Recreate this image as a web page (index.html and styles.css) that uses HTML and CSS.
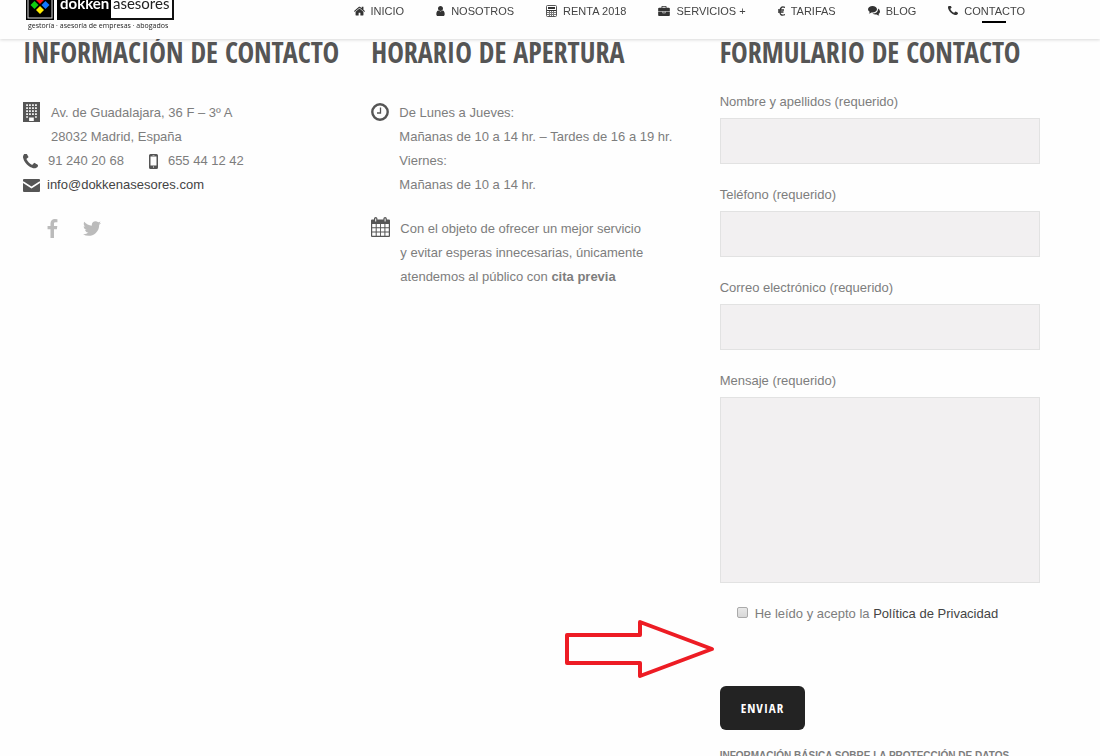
FILE: index.html
```html
<!DOCTYPE html>
<html lang="es">
  <head>
    <meta charset="utf-8">
    <title>Contacto - Dokken Asesores</title>
    <link rel="stylesheet" href="styles.css">
  </head>
  <body>
    <header class="header">
      <a href="#" class="logo" aria-label="Dokken Asesores">
        <svg width="150" height="40" viewBox="0 0 150 40">
          <rect x="1" y="-1" width="28" height="30" fill="#000"/>
          <rect x="3" y="1" width="24" height="26" fill="none" stroke="#ddd"/>
          <path d="M15 5l4 4-4 4-4-4z" fill="#f11"/>
          <path d="M9.500 10l4 4-4 4-4-4z" fill="#1c1"/>
          <path d="M20.500 10l4 4-4 4-4-4z" fill="#17f"/>
          <path d="M15 15l4 4-4 4-4-4z" fill="#fe0"/>
          <rect x="33" y="0" width="115" height="28" fill="#fff" stroke="#111" stroke-width="2"/>
          <rect x="32" y="0" width="54" height="29" fill="#000"/>
          <text x="35" y="18" class="logo-name logo-bold">dokken</text>
          <text x="88" y="18" class="logo-name">asesores</text>
          <text x="3" y="37" class="logo-tag">gestoría · asesoría de empresas · abogados</text>
        </svg>
      </a>
      <nav class="nav">
        <a href="#"><svg width="11" height="10" viewBox="90 190 1610 1400"><path d="M1472 992v480q0 26-19 45t-45 19h-384v-384h-256v384h-384q-26 0-45-19t-19-45v-480q0-1 .5-3t.5-3l575-474 575 474q1 2 1 6zm223-69l-62 74q-8 9-21 11h-3q-13 0-21-7l-692-577-692 577q-12 8-24 7-13-2-21-11l-62-74q-8-10-7-23.500t11-21.500l719-599q32-26 76-26t76 26l244 204v-195q0-14 9-23t23-9h192q14 0 23 9t9 23v408l219 182q10 8 11 21.500t-7 23.500z"/></svg>INICIO</a>
        <a href="#"><svg width="9" height="10" viewBox="256 128 1280 1536"><path d="M1536 1399q0 109-62.500 187t-150.500 78h-854q-88 0-150.500-78t-62.500-187q0-85 8.500-160.500t31.500-152 58.500-131 94-89 134.500-34.500q131 128 313 128t313-128q76 0 134.500 34.500t94 89 58.500 131 31.500 152 8.500 160.500zm-256-887q0 159-112.500 271.500t-271.500 112.500-271.500-112.500-112.500-271.500 112.500-271.500 271.500-112.500 271.500 112.500 112.500 271.500z"/></svg>NOSOTROS</a>
        <a href="#"><svg width="11" height="12" viewBox="0 0 11 12"><rect x=".5" y=".5" width="10" height="11" rx="1" fill="none" stroke="#555"/><path d="M2 2h7v2H2zM1 5h9v1H1z"/><path d="M1 7.500h9M1 9.500h9M3.500 6v5M5.500 6v5M7.500 6v5" fill="none" stroke="#777"/></svg>RENTA 2018</a>
        <a href="#"><svg width="12" height="10" viewBox="0 0 1792 1536"><path d="M640 256h512v-128h-512v128zm1152 640v480q0 66-47 113t-113 47h-1472q-66 0-113-47t-47-113v-480h672v160q0 26 19 45t45 19h320q26 0 45-19t19-45v-160h672zm-768 0v128h-256v-128h256zm768-480v384h-1792v-384q0-66 47-113t113-47h352v-160q0-40 28-68t68-28h576q40 0 68 28t28 68v160h352q66 0 113 47t47 113z"/></svg>SERVICIOS +</a>
        <a href="#"><svg width="7" height="10" viewBox="0 0 7 10"><path d="M7 1.500Q2.500-.5 2 5T7 8.500M0 4h6M0 6h5.500" fill="none" stroke="#333" stroke-width="1.300"/></svg>TARIFAS</a>
        <a href="#"><svg width="12" height="10" viewBox="0 0 12 10"><path d="M4.500 0C7 0 9 1.500 9 3.300S7 6.600 4.500 6.600L3.500 6.500Q2.200 7.600.8 7.600L1.800 5.900Q0 5 0 3.300C0 1.500 2 0 4.500 0zM10 2.500Q12 3.700 12 5.400 12 7 10.500 7.900L11.300 9.600Q9.800 9.500 8.600 8.500 6 8.800 4.500 7.600 9.500 7.400 10 3.500z"/></svg>BLOG</a>
        <a href="#" class="active"><svg width="10" height="10" viewBox="192 256 1408 1408"><path d="M1600 1240q0 27-10 70.500t-21 68.500q-21 50-122 106-94 51-186 51-27 0-53-3.500t-57.500-12.500-47-14.500-55.500-20.500-49-18q-98-35-175-83-127-79-264-216t-216-264q-48-77-83-175-3-9-18-49t-20.500-55.500-14.500-47-12.500-57.500-3.500-53q0-92 51-186 56-101 106-122 25-11 68.500-21t70.500-10q14 0 21 3 18 6 53 76 11 19 30 54t35 63.500 31 53.500q3 4 17.500 25t21.500 35.500 7 28.500q0 20-28.500 50t-62 55-62 53-28.500 46q0 9 5 22.500t8.500 20.500 14 24 11.500 19q76 137 174 235t235 174q2 1 19 11.500t24 14 20.500 8.500 22.500 5q18 0 46-28.500t53-62 55-62 50-28.500q14 0 28.500 7t35.500 21.500 25 17.500q25 15 53.500 31t63.500 35 54 30q70 35 76 53 3 7 3 21z"/></svg>CONTACTO</a>
      </nav>
    </header>

    <main class="columns">
      <section>
        <h2>INFORMACIÓN DE CONTACTO</h2>
        <div class="row address">
          <svg width="17" height="20" viewBox="0 0 17 20"><path fill-rule="evenodd" d="M0 0h17v20H0zM3.200 2.200v1.700h1.700V2.200zM6.100 2.200v1.700h1.700V2.200zM9.100 2.200v1.700h1.700V2.200zM12.100 2.200v1.700h1.700V2.200zM3.200 5.200v1.700h1.700V5.200zM6.100 5.200v1.700h1.700V5.200zM9.100 5.200v1.700h1.700V5.200zM12.100 5.200v1.700h1.700V5.200zM3.200 8.200v1.700h1.700V8.200zM6.100 8.200v1.700h1.700V8.200zM9.100 8.200v1.700h1.700V8.200zM12.100 8.200v1.700h1.700V8.200zM3.200 11.200v1.700h1.700v-1.700zM6.100 11.200v1.700h1.700v-1.700zM9.100 11.200v1.700h1.700v-1.700zM12.100 11.200v1.700h1.700v-1.700zM3.200 14.200v1.500h1.700v-1.500zM12.100 14.200v1.500h1.700v-1.500zM6.100 15.500V19h4.700v-3.500z"/></svg>
          <p>Av. de Guadalajara, 36 F – 3º A<br>28032 Madrid, España</p>
        </div>
        <div class="row phones">
          <svg width="15" height="15" viewBox="192 256 1408 1280"><path d="M1600 1240q0 27-10 70.500t-21 68.500q-21 50-122 106-94 51-186 51-27 0-53-3.500t-57.500-12.500-47-14.500-55.500-20.500-49-18q-98-35-175-83-127-79-264-216t-216-264q-48-77-83-175-3-9-18-49t-20.500-55.500-14.500-47-12.500-57.500-3.500-53q0-92 51-186 56-101 106-122 25-11 68.500-21t70.500-10q14 0 21 3 18 6 53 76 11 19 30 54t35 63.500 31 53.500q3 4 17.500 25t21.500 35.500 7 28.500q0 20-28.500 50t-62 55-62 53-28.500 46q0 9 5 22.500t8.500 20.500 14 24 11.500 19q76 137 174 235t235 174q2 1 19 11.500t24 14 20.500 8.500 22.500 5q18 0 46-28.500t53-62 55-62 50-28.500q14 0 28.500 7t35.500 21.500 25 17.500q25 15 53.500 31t63.500 35 54 30q70 35 76 53 3 7 3 21z"/></svg>
          <span>91 240 20 68</span>
          <svg class="mobile" width="9" height="15" viewBox="0 0 9 15"><path fill-rule="evenodd" d="M1.500 0h6Q9 0 9 1.500v12Q9 15 7.500 15h-6Q0 15 0 13.500v-12Q0 0 1.500 0zM1.500 2.500v9h6v-9zM3.500 1v.6h2V1zM4 12.500v1h1v-1z"/></svg>
          <span>655 44 12 42</span>
        </div>
        <div class="row mail">
          <svg width="17" height="13" viewBox="0 0 17 13"><rect width="17" height="13" rx="1"/><path d="M0 3l8.500 5.500L17 3" fill="none" stroke="#fff" stroke-width="1.500"/></svg>
          <a href="mailto:info@dokkenasesores.com">info@dokkenasesores.com</a>
        </div>
        <div class="social">
          <a href="#" aria-label="Facebook"><svg width="11" height="19" viewBox="479 0 864 1664"><path d="M1343 12v264h-157q-86 0-116 36t-30 108v189h293l-39 296h-254v759h-306v-759h-255v-296h255v-218q0-186 104-288.500t277-102.500q147 0 228 12z"/></svg></a>
          <a href="#" aria-label="Twitter"><svg width="18" height="15" viewBox="108 256 1576 1280"><path d="M1684 408q-67 98-162 167 1 14 1 42 0 130-38 259.500t-115.500 248.500-184.500 210.500-258 146-323 54.500q-271 0-496-145 35 4 78 4 225 0 401-138-105-2-188-64.500t-114-159.500q33 5 61 5 43 0 85-11-112-23-185.500-111.500t-73.500-205.500v-4q68 38 146 41-66-44-105-115t-39-154q0-88 44-163 121 149 294.500 238.500t371.500 99.500q-8-38-8-74 0-134 94.500-228.500t228.500-94.500q140 0 236 102 109-21 205-78-37 115-142 178 93-10 186-50z"/></svg></a>
        </div>
      </section>

      <section>
        <h2>HORARIO DE APERTURA</h2>
        <div class="row hours">
          <svg width="18" height="18" viewBox="0 0 18 18"><circle cx="9" cy="9" r="7.700" fill="none" stroke="#555" stroke-width="2.400"/><path d="M9.500 4.500V10H6" fill="none" stroke="#555" stroke-width="1.300"/></svg>
          <p>De Lunes a Jueves:<br>Mañanas de 10 a 14 hr. – Tardes de 16 a 19 hr.<br>Viernes:<br>Mañanas de 10 a 14 hr.</p>
        </div>
        <div class="row notice">
          <svg width="19" height="20" viewBox="0 0 19 20"><path fill-rule="evenodd" d="M1 2.500h2V1.500Q3 0 4.700 0T6.400 1.500v1h6v-1Q12.400 0 14.100 0t1.700 1.500v1H18q1 0 1 1V19q0 1-1 1H1q-1 0-1-1V3.500q0-1 1-1zM4.200 1.400v3h1v-3zM13.600 1.400v3h1v-3zM1.200 7v3.300h3.500V7zM5.700 7v3.300h3.400V7zM10 7v3.300h3.400V7zM14.400 7v3.300h3.400V7zM1.200 11.200v3.300h3.500v-3.300zM5.700 11.200v3.300h3.400v-3.300zM10 11.200v3.300h3.400v-3.300zM14.400 11.200v3.300h3.400v-3.300zM1.200 15.500v3.300h3.500v-3.300zM5.700 15.500v3.300h3.400v-3.300zM10 15.500v3.300h3.400v-3.300zM14.400 15.500v3.300h3.400v-3.300z"/></svg>
          <p>Con el objeto de ofrecer un mejor servicio<br>y evitar esperas innecesarias, únicamente<br>atendemos al público con <strong>cita previa</strong></p>
        </div>
      </section>

      <section>
        <h2>FORMULARIO DE CONTACTO</h2>
        <form class="form">
          <div class="field">
            <label for="nombre">Nombre y apellidos (requerido)</label>
            <input type="text" id="nombre">
          </div>
          <div class="field">
            <label for="telefono">Teléfono (requerido)</label>
            <input type="tel" id="telefono">
          </div>
          <div class="field">
            <label for="correo">Correo electrónico (requerido)</label>
            <input type="email" id="correo">
          </div>
          <div class="field">
            <label for="mensaje">Mensaje (requerido)</label>
            <textarea id="mensaje"></textarea>
          </div>
          <div class="accept">
            <input type="checkbox" id="acepto">
            <label for="acepto">He leído y acepto la <a href="#">Política de Privacidad</a></label>
            <svg class="arrow" width="150" height="60" viewBox="0 0 150 60"><path d="M2 16h73V3l72 27-72 27V44H2z" fill="none" stroke="#ed1c24" stroke-width="4" stroke-linejoin="round"/></svg>
          </div>
          <button type="submit">ENVIAR</button>
        </form>
        <p class="legal">INFORMACIÓN BÁSICA SOBRE LA PROTECCIÓN DE DATOS</p>
      </section>
    </main>
  </body>
</html>
```
FILE: styles.css
```css
* {
  box-sizing: border-box;
}
body {
  margin: 0;
  height: 100vh;
  overflow: hidden;
  background-color: #fefefe;
  color: #7d7d7d;
  font-family: "Liberation Sans", Arial, sans-serif;
  font-size: 13px;
  line-height: 24px;
}
p {
  margin: 0;
}
a {
  color: #444;
  text-decoration: none;
}
svg {
  flex: none;
  fill: #555;
}
.header {
  position: sticky;
  top: 0;
  z-index: 2;
  display: flex;
  justify-content: space-between;
  align-items: flex-end;
  height: 39px;
  padding: 0 75px 8px 25px;
  background-color: #fefefe;
  box-shadow: 0 1px 3px rgba(0, 0, 0, 0.15);
}
.logo svg {
  display: block;
  overflow: visible;
}
.logo-name {
  font-family: Lato, sans-serif;
  font-size: 15px;
  fill: #222;
}
.logo-bold {
  font-weight: bold;
  fill: #fff;
}
.logo-tag {
  font-family: "Open Sans", sans-serif;
  font-size: 7px;
  fill: #222;
}
.nav {
  display: flex;
  gap: 32px;
  font-size: 11px;
}
.nav a {
  display: flex;
  align-items: center;
  gap: 6px;
  height: 24px;
  margin-bottom: 8px;
}
.nav svg {
  fill: #333;
}
.nav .active {
  position: relative;
}
.nav .active::after {
  content: "";
  position: absolute;
  left: 34px;
  bottom: 0;
  width: 24px;
  height: 2px;
  background-color: #000;
}
.columns {
  display: grid;
  grid-template-columns: repeat(3, minmax(0, 1fr));
  gap: 28px;
  padding: 0 60px 0 23px;
}
h2 {
  margin: 0 0 36px;
  color: #555;
  font-family: "Open Sans Condensed", "Liberation Sans Narrow", "Open Sans", sans-serif;
  font-size: 28px;
  font-weight: bold;
  line-height: 26px;
  white-space: nowrap;
}
.row {
  display: flex;
  align-items: center;
}
.address,
.hours,
.notice {
  align-items: flex-start;
}
.address {
  gap: 11px;
}
.address svg {
  margin-top: 1px;
}
.phones {
  gap: 10px;
}
.phones .mobile {
  margin-left: 15px;
}
.mail {
  gap: 7px;
}
.hours {
  gap: 10px;
  margin-bottom: 20px;
}
.notice {
  gap: 10px;
}
.hours svg {
  margin-top: 2px;
}
.social {
  display: flex;
  align-items: center;
  gap: 25px;
  margin: 22px 0 0 24px;
}
.social a {
  display: flex;
}
.social svg {
  fill: #bbb;
}
.form {
  margin-top: -11px;
}
.field {
  display: flex;
  flex-direction: column;
  gap: 4px;
  margin-bottom: 19px;
}
.field input,
.field textarea {
  width: 100%;
  height: 46px;
  padding: 8px 12px;
  border: 1px solid #e2e2e2;
  border-radius: 0;
  background-color: #f2f0f1;
  color: #555;
  font: inherit;
}
.field textarea {
  height: 186px;
  resize: none;
}
.accept {
  position: relative;
  display: flex;
  align-items: center;
  gap: 7px;
  padding-left: 17px;
  margin-bottom: 60px;
}
.accept input {
  appearance: none;
  width: 11px;
  height: 11px;
  margin: 0 0 4px;
  border: 1px solid #aaa;
  border-radius: 2px;
  background: linear-gradient(#e8e8e8, #d8d8d8);
}
.arrow {
  position: absolute;
  left: -155px;
  top: 17px;
}
button {
  display: block;
  height: 44px;
  padding: 0 21px;
  border: none;
  border-radius: 6px;
  background-color: #232323;
  color: #fff;
  font-family: "Open Sans Condensed", "Liberation Sans Narrow", "Open Sans", sans-serif;
  font-size: 13px;
  font-weight: bold;
  letter-spacing: 1px;
  cursor: pointer;
}
.legal {
  margin-top: 14px;
  font-size: 10px;
  font-weight: bold;
  white-space: nowrap;
}
```
